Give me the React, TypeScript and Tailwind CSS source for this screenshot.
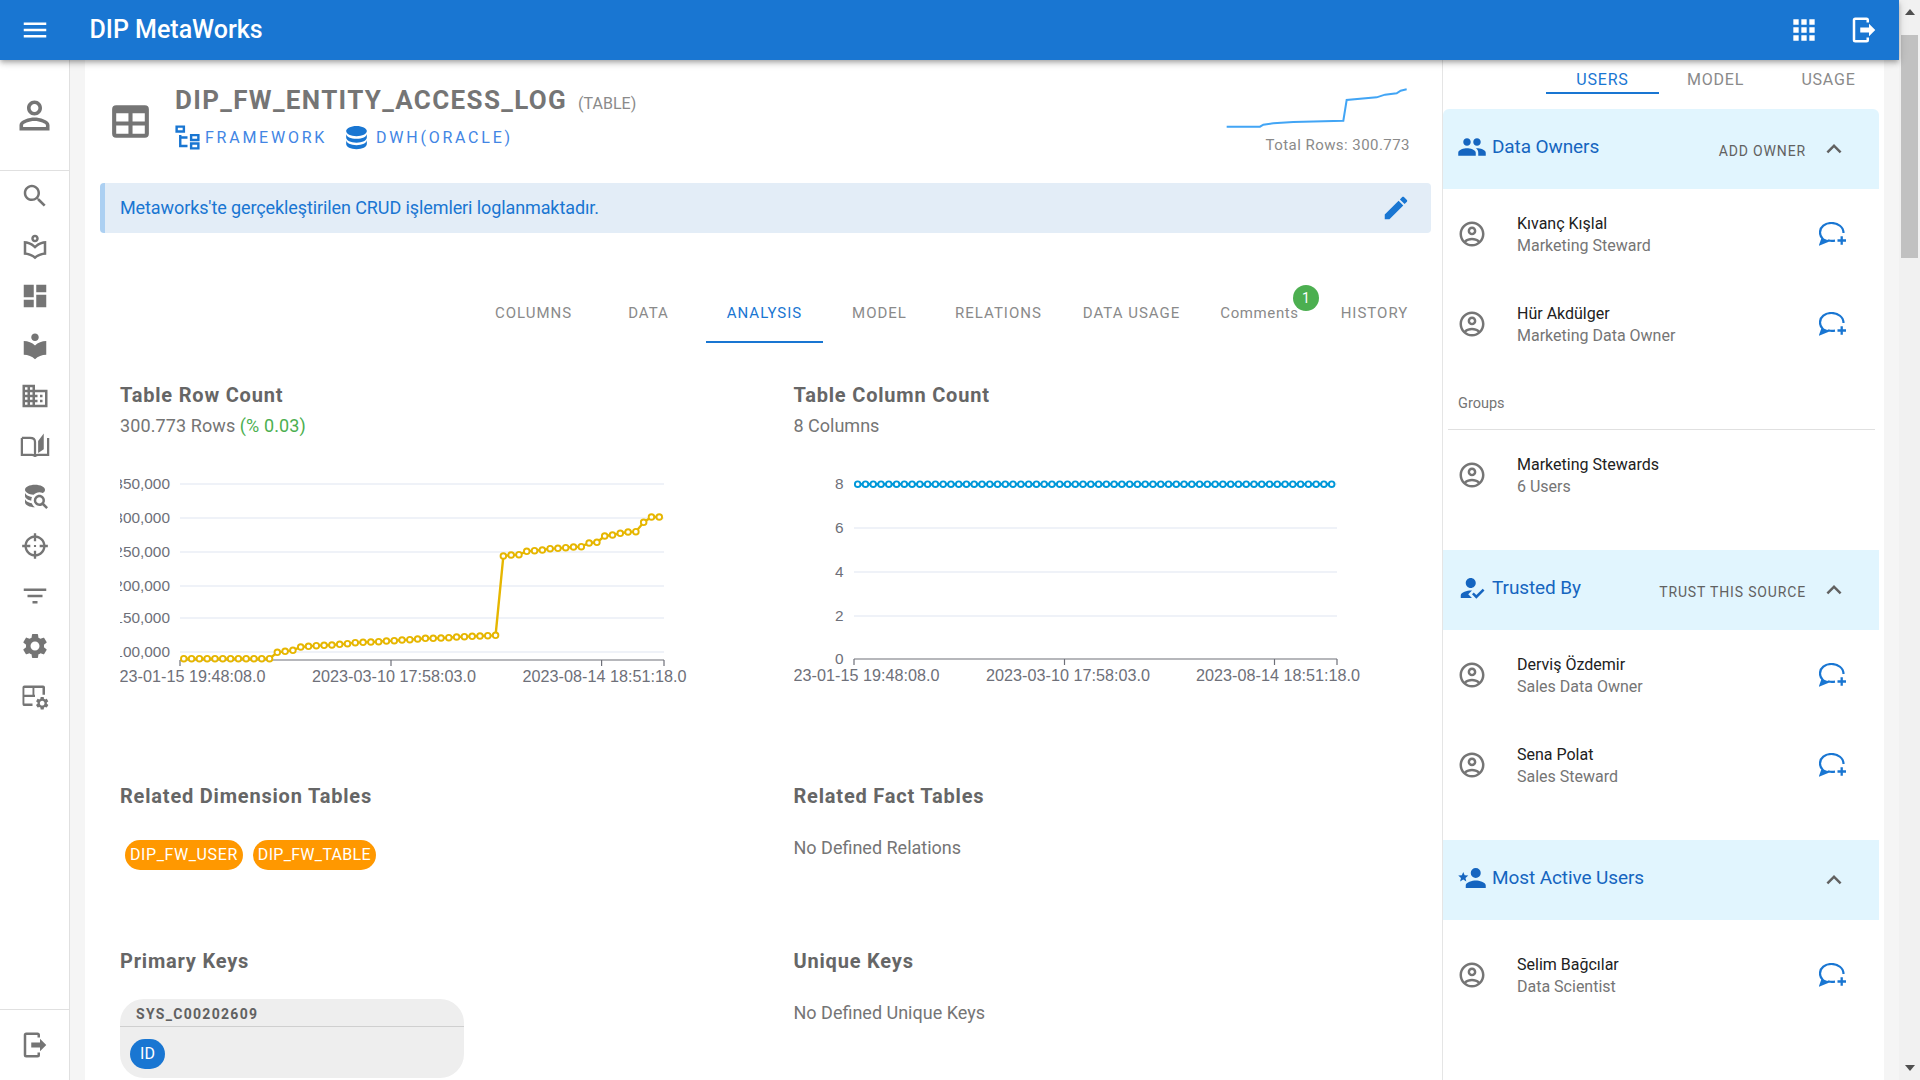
import type { ReactNode } from "react";

// Icon paths (24 unit box)
const P = {
  menu: "M3 18h18v-2H3v2zm0-5h18v-2H3v2zm0-7v2h18V6H3z",
  apps: "M4 8h4V4H4v4zm6 12h4v-4h-4v4zm-6 0h4v-4H4v4zm0-6h4v-4H4v4zm6 0h4v-4h-4v4zm6-10v4h4V4h-4zm-6 4h4V4h-4v4zm6 6h4v-4h-4v4zm0 6h4v-4h-4v4z",
  logout: "M16,17V14H9V10H16V7L21,12L16,17M14,2A2,2 0 0,1 16,4V6H14V4H5V20H14V18H16V20A2,2 0 0,1 14,22H5A2,2 0 0,1 3,20V4A2,2 0 0,1 5,2H14Z",
  person: "M12 5.9c1.16 0 2.1.94 2.1 2.1s-.94 2.1-2.1 2.1S9.9 9.16 9.9 8s.94-2.1 2.1-2.1m0 9c2.97 0 6.1 1.46 6.1 2.1v1.1H5.9V17c0-.64 3.13-2.1 6.1-2.1M12 4C9.79 4 8 5.79 8 8s1.79 4 4 4 4-1.79 4-4-1.79-4-4-4zm0 9c-2.67 0-8 1.34-8 4v3h16v-3c0-2.66-5.33-4-8-4z",
  search: "M15.5 14h-.79l-.28-.27C15.41 12.59 16 11.11 16 9.5 16 5.91 13.09 3 9.5 3S3 5.91 3 9.5 5.91 16 9.5 16c1.61 0 3.09-.59 4.23-1.57l.27.28v.79l5 4.99L20.49 19l-4.99-5zm-6 0C7.01 14 5 11.99 5 9.5S7.01 5 9.5 5 14 7.01 14 9.5 11.99 14 9.5 14z",
  libraryOutline: "M12 9c1.66 0 3-1.34 3-3s-1.34-3-3-3-3 1.34-3 3 1.34 3 3 3zm0-4c.55 0 1 .45 1 1s-.45 1-1 1-1-.45-1-1 .45-1 1-1zm0 6.55C9.64 9.35 6.48 8 3 8v11c3.48 0 6.64 1.35 9 3.55 2.36-2.19 5.52-3.55 9-3.55V8c-3.48 0-6.64 1.35-9 3.55zm7 5.58c-2.53.34-4.93 1.3-7 2.82-2.06-1.52-4.47-2.49-7-2.83v-6.95c2.1.38 4.05 1.35 5.64 2.83L12 14.28l1.36-1.27c1.59-1.48 3.54-2.45 5.64-2.83v6.95z",
  library: "M12 11.55C9.64 9.35 6.48 8 3 8v11c3.48 0 6.64 1.35 9 3.55 2.36-2.19 5.52-3.55 9-3.55V8c-3.48 0-6.64 1.35-9 3.55zM12 8c1.66 0 3-1.34 3-3s-1.34-3-3-3-3 1.34-3 3 1.34 3 3 3z",
  dashboard: "M3 13h8V3H3v10zm0 8h8v-6H3v6zm10 0h8V11h-8v10zm0-18v6h8V3h-8z",
  domain: "M12 7V3H2v18h20V7H12zM6 19H4v-2h2v2zm0-4H4v-2h2v2zm0-4H4V9h2v2zm0-4H4V5h2v2zm4 12H8v-2h2v2zm0-4H8v-2h2v2zm0-4H8V9h2v2zm0-4H8V5h2v2zm10 12h-8v-2h2v-2h-2v-2h2v-2h-2V9h8v10zm-2-8h-2v2h2v-2zm0 4h-2v2h2v-2z",
  dbSearch: "M18.68,12.32C16.92,10.56 14.07,10.57 12.32,12.33C10.56,14.09 10.56,16.94 12.32,18.69C13.81,20.17 16.11,20.43 17.89,19.32L21,22.39L22.39,21L19.3,17.89C20.43,16.12 20.17,13.8 18.68,12.32M17.27,17.27C16.29,18.25 14.71,18.24 13.73,17.27C12.76,16.29 12.76,14.71 13.74,13.73C14.71,12.76 16.29,12.76 17.27,13.73C18.24,14.71 18.24,16.29 17.27,17.27M10.9,20.1C10.25,19.44 9.74,18.65 9.42,17.78C6.27,17.25 4,15.76 4,14V17C4,19.21 7.58,21 12,21V21C11.6,20.74 11.23,20.44 10.9,20.1M4,9V12C4,13.68 6.07,15.12 9,15.7C9,15.63 9,15.57 9,15.5C9,14.57 9.2,13.65 9.58,12.81C6.34,12.3 4,10.79 4,9M12,3C7.58,3 4,4.79 4,7C4,9 7,10.68 10.85,11H10.9C12.1,9.74 13.76,9 15.5,9C16.41,9.03 17.31,9.25 18.14,9.64C19.3,9.11 20,8.39 20,7C20,4.79 16.42,3 12,3Z",
  crosshair: "M3.05 13H1V11H3.05C3.5 6.83 6.83 3.5 11 3.05V1H13V3.05C17.17 3.5 20.5 6.83 20.95 11H23V13H20.95C20.5 17.17 17.17 20.5 13 20.95V23H11V20.95C6.83 20.5 3.5 17.17 3.05 13M12 5C8.13 5 5 8.13 5 12S8.13 19 12 19 19 15.87 19 12 15.87 5 12 5ZM11 5h2v3h-2zM11 16h2v3h-2zM5 11h3v2H5zM16 11h3v2h-3zM11.1 11.1h1.8v1.8h-1.8z",
  filter: "M10 18h4v-2h-4v2zM3 6v2h18V6H3zm3 7h12v-2H6v2z",
  settings: "M19.14 12.94c.04-.3.06-.61.06-.94 0-.32-.02-.64-.07-.94l2.03-1.58c.18-.14.23-.41.12-.61l-1.92-3.32c-.12-.22-.37-.29-.59-.22l-2.39.96c-.5-.38-1.03-.7-1.62-.94l-.36-2.54c-.04-.24-.24-.41-.48-.41h-3.84c-.24 0-.43.17-.47.41l-.36 2.54c-.59.24-1.13.57-1.62.94l-2.39-.96c-.22-.08-.47 0-.59.22L2.74 8.87c-.12.21-.08.47.12.61l2.03 1.58c-.05.3-.09.63-.09.94s.02.64.07.94l-2.03 1.58c-.18.14-.23.41-.12.61l1.92 3.32c.12.22.37.29.59.22l2.39-.96c.5.38 1.03.7 1.62.94l.36 2.54c.05.24.24.41.48.41h3.84c.24 0 .44-.17.47-.41l.36-2.54c.59-.24 1.13-.56 1.62-.94l2.39.96c.22.08.47 0 .59-.22l1.92-3.32c.12-.22.07-.47-.12-.61l-2.01-1.58zM12 15.6c-1.98 0-3.6-1.62-3.6-3.6s1.62-3.6 3.6-3.6 3.6 1.62 3.6 3.6-1.62 3.6-3.6 3.6z",
  table: "M5,4H19A2,2 0 0,1 21,6V18A2,2 0 0,1 19,20H5A2,2 0 0,1 3,18V6A2,2 0 0,1 5,4M5,8V12H11V8H5M13,8V12H19V8H13M5,14V18H11V14H5M13,14V18H19V14H13Z",
  fileTree: "M12 13H7V18H12V20H5V10H7V11H12V13M8 4V6H4V4H8M10 2H2V8H10V2M20 11V13H16V11H20M22 9H14V15H22V9M20 18V20H16V18H20M22 16H14V22H22V16Z",
  database: "M12,3C7.58,3 4,4.79 4,7C4,9.21 7.58,11 12,11C16.42,11 20,9.21 20,7C20,4.79 16.42,3 12,3M4,9V12C4,14.21 7.58,16 12,16C16.42,16 20,14.21 20,12V9C20,11.21 16.42,13 12,13C7.58,13 4,11.21 4,9M4,14V17C4,19.21 7.58,21 12,21C16.42,21 20,19.21 20,17V14C20,16.21 16.42,18 12,18C7.58,18 4,16.21 4,14Z",
  edit: "M3 17.25V21h3.75L17.81 9.94l-3.75-3.75L3 17.25zM20.71 7.04c.39-.39.39-1.02 0-1.41l-2.34-2.34c-.39-.39-1.02-.39-1.41 0l-1.83 1.83 3.75 3.75 1.83-1.83z",
  people: "M16 11c1.66 0 2.99-1.34 2.99-3S17.66 5 16 5c-1.66 0-3 1.34-3 3s1.34 3 3 3zm-8 0c1.66 0 2.99-1.34 2.99-3S9.66 5 8 5C6.34 5 5 6.34 5 8s1.34 3 3 3zm0 2c-2.33 0-7 1.17-7 3.5V19h14v-2.5c0-2.33-4.67-3.5-7-3.5zm8 0c-.29 0-.62.02-.97.05 1.16.84 1.97 1.97 1.97 3.45V19h6v-2.5c0-2.33-4.67-3.5-7-3.5z",
  howToReg: "M9 17l3-2.94c-.39-.04-.68-.06-1-.06-2.67 0-8 1.34-8 4v2h9l-3-3zm2-5c2.21 0 4-1.79 4-4s-1.79-4-4-4-4 1.79-4 4 1.79 4 4 4m4.47 8.5L12 17l1.4-1.41 2.07 2.08 5.13-5.17 1.4 1.41z",
  accountStar: "M15,14C12.33,14 7,15.33 7,18V20H23V18C23,15.33 17.67,14 15,14M15,12A4,4 0 0,0 19,8A4,4 0 0,0 15,4A4,4 0 0,0 11,8A4,4 0 0,0 15,12M5,13.28L7.45,14.77L6.8,11.96L9,10.08L6.11,9.83L5,7.19L3.87,9.83L1,10.08L3.18,11.96L2.5,14.77L5,13.28Z",
  accountCircle: "M12 2C6.48 2 2 6.48 2 12s4.48 10 10 10 10-4.48 10-10S17.52 2 12 2zM7.35 18.5C8.66 17.56 10.26 17 12 17s3.34.56 4.65 1.5c-1.31.94-2.91 1.5-4.65 1.5s-3.34-.56-4.65-1.5zm10.79-1.38C16.45 15.8 14.32 15 12 15s-4.45.8-6.14 2.12C4.7 15.73 4 13.95 4 12c0-4.42 3.58-8 8-8s8 3.58 8 8c0 1.95-.7 3.73-1.86 5.12zM12 6c-1.93 0-3.5 1.57-3.5 3.5S10.07 13 12 13s3.5-1.57 3.5-3.5S13.93 6 12 6zm0 5c-.83 0-1.5-.67-1.5-1.5S11.17 8 12 8s1.5.67 1.5 1.5S12.83 11 12 11z",
  chevronUp: "M12 8l-6 6 1.41 1.41L12 10.83l4.59 4.58L18 14z",
};

function Icon({ d, className }: { d: string; className: string }) {
  return (
    <svg viewBox="0 0 24 24" className={className} fill="currentColor" fillRule="evenodd">
      <path d={d} />
    </svg>
  );
}

function BookIcon({ className }: { className: string }) {
  return (
    <svg viewBox="0 0 24 24" className={className} fill="none" stroke="currentColor" strokeWidth="1.8">
      <path d="M1.5 5.5V19h8c1.3 0 2.5.5 2.5 1.5 0-1 1.2-1.5 2.5-1.5h8V5.5" />
      <path d="M1.5 5.5H8c2.3 0 4 1.2 4 3.2v11.8" />
      <path d="M14.5 8L19 2v12.5L14.5 17.5z" fill="currentColor" stroke="none" />
    </svg>
  );
}

function TableCogIcon({ className }: { className: string }) {
  return (
    <svg viewBox="0 0 24 24" className={className} fill="currentColor">
      <path
        fillRule="evenodd"
        d="M3.5 3.5h15A1.5 1.5 0 0 1 20 5v6h-2V5.5h-6.5V11H10V5.5H3.5V11H12v1.8H3.5V18H10v2H3.5A1.5 1.5 0 0 1 2 18.5V5a1.5 1.5 0 0 1 1.5-1.5z"
      />
      <g transform="translate(11.5 11.5) scale(0.52)">
        <path d={P.settings} />
      </g>
    </svg>
  );
}

function ChatAddIcon() {
  return (
    <svg viewBox="0 0 28 24" className="w-[28px] h-[24px] text-[#1976d2]" fill="none" stroke="currentColor" strokeWidth="2.2">
      <path d="M24.5 11C24.5 5 19 1 12.5 1 6 1 1 5 1 10.5c0 2.5 1 4.5 2.5 6L1.5 22l8.5-3.5c1 .3 3 .5 6 .1" />
      <path d="M1.5 22l2-6 6 2.5z" fill="currentColor" stroke="none" />
      <path d="M18.5 18.5h8.5M22.7 14.2v8.6" strokeWidth="2.3" />
    </svg>
  );
}

function TopBar() {
  return (
    <header className="relative z-10 h-[60px] shrink-0 bg-[#1976d2] text-white flex items-center shadow-[0_2px_4px_-1px_rgba(0,0,0,0.2),0_4px_5px_0_rgba(0,0,0,0.14),0_1px_10px_0_rgba(0,0,0,0.12)]">
      <Icon d={P.menu} className="ml-[20px] w-[30px] h-[30px]" />
      <span className="ml-[39.5px] text-[25px] font-medium">DIP MetaWorks</span>
      <Icon d={P.apps} className="ml-auto w-[32px] h-[32px]" />
      <Icon d={P.logout} className="ml-[29px] mr-[20px] w-[30px] h-[30px]" />
    </header>
  );
}

function SideNav() {
  const cls = "w-[30px] h-[30px]";
  const items: ReactNode[] = [
    <Icon d={P.search} className={cls} />,
    <Icon d={P.libraryOutline} className={cls} />,
    <Icon d={P.dashboard} className={cls} />,
    <Icon d={P.library} className={cls} />,
    <Icon d={P.domain} className={cls} />,
    <BookIcon className={cls} />,
    <Icon d={P.dbSearch} className={cls} />,
    <Icon d={P.crosshair} className="w-[28px] h-[28px]" />,
    <Icon d={P.filter} className={cls} />,
    <Icon d={P.settings} className={cls} />,
    <TableCogIcon className={cls} />,
  ];
  return (
    <nav className="w-[70px] shrink-0 bg-white border-r border-[#e0e0e0] text-[#757575] flex flex-col">
      <div className="h-[111px] shrink-0 flex items-center justify-center border-b border-[#e0e0e0]">
        <Icon d={P.person} className="w-[45px] h-[45px]" />
      </div>
      <div className="flex flex-col items-center">
        {items.map((it, i) => (
          <div key={i} className="h-[50px] flex items-center justify-center">
            {it}
          </div>
        ))}
      </div>
      <div className="mt-auto h-[71px] border-t border-[#e0e0e0] flex items-center justify-center">
        <Icon d={P.logout} className="w-[30px] h-[30px]" />
      </div>
    </nav>
  );
}

const TABS = [
  { label: "COLUMNS", w: "w-[115px]" },
  { label: "DATA", w: "w-[115px]" },
  { label: "ANALYSIS", w: "w-[117px]", active: true },
  { label: "MODEL", w: "w-[113px]" },
  { label: "RELATIONS", w: "w-[125px]" },
  { label: "DATA USAGE", w: "w-[141px]" },
  { label: "Comments", w: "w-[115px]", badge: true },
  { label: "HISTORY", w: "w-[115px]" },
];

function MainTabs() {
  return (
    <div className="mt-[53px] h-[57px] -mr-[1px] flex justify-end">
      {TABS.map((t) => (
        <div
          key={t.label}
          className={`${t.w} relative flex items-center justify-center text-[15px] border-b-2 ${
            t.badge ? "tracking-[0.6px]" : "tracking-[1px]"
          } ${t.active ? "border-[#1976d2] text-[#1976d2]" : "border-transparent text-[#8a8a8a]"}`}
        >
          {t.label}
          {t.badge && (
            <span className="absolute right-[-2px] top-[-1px] w-[26px] h-[26px] rounded-full bg-[#4caf50] text-white text-[14px] tracking-normal flex items-center justify-center">
              1
            </span>
          )}
        </div>
      ))}
    </div>
  );
}

type ChartProps = {
  gridY: number[];
  yLabels: string[];
  yLabelX: number;
  ticks: number[];
  labelX: number[];
  axisY: number;
  axisLabel?: string;
  plotEnd: number;
  points: [number, number][];
  color: string;
};

function LineChart({ gridY, yLabels, yLabelX, ticks, labelX, axisY, axisLabel, plotEnd, points, color }: ChartProps) {
  const xLabels = ["2023-01-15 19:48:08.0", "2023-03-10 17:58:03.0", "2023-08-14 18:51:18.0"];
  return (
    <svg width="600" height="230" className="font-['Liberation_Sans',sans-serif] text-[16.2px] block">
      {gridY.map((y, i) => (
        <g key={i}>
          <line x1={ticks[0]} x2={plotEnd} y1={y} y2={y} stroke="#e0e6f1" strokeWidth="1.2" />
          <text x={yLabelX} y={y + 1} textAnchor="end" dominantBaseline="middle" fill="#6e7079" className="text-[15.4px]">
            {yLabels[i]}
          </text>
        </g>
      ))}
      {axisLabel && (
        <text x={yLabelX} y={axisY + 0.5} textAnchor="end" dominantBaseline="middle" fill="#6e7079" className="text-[15.4px]">
          {axisLabel}
        </text>
      )}
      <line x1={ticks[0]} x2={plotEnd} y1={axisY} y2={axisY} stroke="#6e7079" strokeWidth="1.2" />
      {ticks.map((x, i) => (
        <line key={i} x1={x} x2={x} y1={axisY} y2={axisY + 6} stroke="#6e7079" strokeWidth="1.2" />
      ))}
      {xLabels.map((l, i) => (
        <text key={i} x={labelX[i]} y={axisY + 17.5} textAnchor="middle" dominantBaseline="middle" fill="#6e7079">
          {l}
        </text>
      ))}
      <polyline points={points.map((p) => p.join(",")).join(" ")} fill="none" stroke={color} strokeWidth="2.4" />
      {points.map((p, i) => (
        <circle key={i} cx={p[0]} cy={p[1]} r="2.8" fill="#fff" stroke={color} strokeWidth="1.9" />
      ))}
    </svg>
  );
}

// Row count series, read off the chart as pixel heights
const ROW_Y = [
  869, 869, 869, 869, 869, 869, 869, 869, 869, 869, 869, 869, 850, 847, 844, 834, 832, 830, 829, 828, 826, 824, 821, 820,
  819, 818, 816, 815, 813, 812, 810, 808, 808, 807, 806, 804, 803, 802, 801, 800, 799, 561, 558, 557, 547, 545, 543, 539,
  538, 536, 534, 533, 522, 520, 501, 498, 493, 489, 488, 460, 444, 444,
];
const rowPoints: [number, number][] = ROW_Y.map((zy, i) => [100 + (212 + 19.72 * i) / 2.53 - 120, 370 + zy / 3 - 470]);
const colPoints: [number, number][] = ROW_Y.map((_, i) => [63.7 + 7.77 * i, 15.2]);

function SectionTitle({ children }: { children: ReactNode }) {
  return <h3 className="h-[28px] leading-[28px] text-[20px] font-bold tracking-[0.8px] text-[#666666]">{children}</h3>;
}

function BodyText({ children }: { children: ReactNode }) {
  return <p className="mt-[24px] h-[28px] leading-[28px] text-[18px] text-[#757575]">{children}</p>;
}

function Analysis() {
  return (
    <div className="pl-[20px] pt-[38px] grid grid-cols-[673.5px_1fr]">
      <div className="h-[319px]">
        <SectionTitle>Table Row Count</SectionTitle>
        <p className="mt-[5px] h-[24px] leading-[24px] text-[18px] tracking-[0.1px] text-[#757575]">
          300.773 Rows <span className="text-[#4caf50]">(% 0.03)</span>
        </p>
        <div className="mt-[31px]">
          <LineChart
            gridY={[15, 49, 83, 117, 149, 183]}
            yLabels={["350,000", "300,000", "250,000", "200,000", "150,000", "100,000"]}
            yLabelX={50}
            ticks={[60, 271, 481.6, 544]}
            labelX={[63.5, 274, 484.5]}
            axisY={191}
            plotEnd={544}
            points={rowPoints}
            color="#e6b600"
          />
        </div>
      </div>
      <div className="h-[319px]">
        <SectionTitle>Table Column Count</SectionTitle>
        <p className="mt-[5px] h-[24px] leading-[24px] text-[18px] text-[#757575]">8 Columns</p>
        <div className="mt-[31px]">
          <LineChart
            gridY={[15, 59, 103, 147]}
            yLabels={["8", "6", "4", "2"]}
            yLabelX={49.5}
            ticks={[60, 270.5, 480.5, 543]}
            labelX={[63.5, 274, 484]}
            axisY={190}
            axisLabel="0"
            plotEnd={543}
            points={colPoints}
            color="#0098d9"
          />
        </div>
      </div>

      <div className="mt-[82px] h-[88px]">
        <SectionTitle>Related Dimension Tables</SectionTitle>
        <div className="mt-[30px] ml-[5px] flex gap-[10px]">
          <span className="h-[30px] px-[5px] rounded-full bg-[#ff9800] text-white text-[16px] tracking-[0.6px] leading-[30px]">DIP_FW_USER</span>
          <span className="h-[30px] px-[5px] rounded-full bg-[#ff9800] text-white text-[16px] tracking-[0.3px] leading-[30px]">DIP_FW_TABLE</span>
        </div>
      </div>
      <div className="mt-[82px] h-[88px]">
        <SectionTitle>Related Fact Tables</SectionTitle>
        <BodyText>No Defined Relations</BodyText>
      </div>

      <div className="mt-[77px]">
        <SectionTitle>Primary Keys</SectionTitle>
        <div className="mt-[24px] w-[344px] h-[79px] rounded-[24px] bg-[#eeeeee]">
          <div className="h-[28px] border-b border-[#cfcfcf] pl-[16px] text-[14px] leading-[30px] font-bold tracking-[1.3px] text-[#616161]">
            SYS_C00202609
          </div>
          <span className="mt-[12px] ml-[10px] w-[35px] h-[30px] rounded-full bg-[#1976d2] text-white text-[16px] flex items-center justify-center">
            ID
          </span>
        </div>
      </div>
      <div className="mt-[77px]">
        <SectionTitle>Unique Keys</SectionTitle>
        <BodyText>No Defined Unique Keys</BodyText>
      </div>
    </div>
  );
}

function MainContent() {
  const spark = [
    [140, 200], [240, 200], [250, 194], [280, 190], [340, 186], [490, 182], [500, 120], [590, 112], [615, 104], [650, 100], [662, 92], [680, 88],
  ];
  return (
    <main className="flex-1 min-w-0 bg-white pl-[15px] pr-[11px]">
      <div className="h-[123px] flex items-center pl-[6px]">
        <Icon d={P.table} className="w-[49px] h-[49px] text-[#757575] shrink-0" />
        <div className="ml-[20px]">
          <div className="h-[32px] pt-[1px] flex items-baseline">
            <span className="text-[26px] leading-[32px] font-bold tracking-[1.35px] text-[#757575]">DIP_FW_ENTITY_ACCESS_LOG</span>
            <span className="ml-[11px] text-[16px] text-[#8a8a8a]">(TABLE)</span>
          </div>
          <div className="h-[45px] flex items-center text-[#4285e4] text-[16px] tracking-[2.75px]">
            <Icon d={P.fileTree} className="w-[29px] h-[29px] -ml-[2px] text-[#1976d2]" />
            <span className="ml-[3px]">FRAMEWORK</span>
            <Icon d={P.database} className="ml-[14px] w-[31px] h-[31px] text-[#1976d2]" />
            <span className="ml-[4px]">DWH(ORACLE)</span>
          </div>
        </div>
        <div className="ml-auto self-start pt-[25px] pr-[21px] w-[211px]">
          <svg width="190" height="45" className="block ml-auto">
            <polyline points={spark.map(([x, y]) => `${x / 3 - 40},${y / 3 - 25}`).join(" ")} fill="none" stroke="#42a5f5" strokeWidth="2" />
          </svg>
          <p className="mt-[5px] h-[20px] leading-[20px] text-right text-[15px] tracking-[0.45px] text-[#8a8a8a]">Total Rows: 300.773</p>
        </div>
      </div>
      <div className="h-[50px] rounded-[4px] bg-[#e3edf7] border-l-[5px] border-[#acd0f2] pl-[15px] pr-[20px] flex items-center justify-between">
        <span className="pb-[2px] text-[18px] tracking-[-0.1px] text-[#1976d2]">Metaworks'te gerçekleştirilen CRUD işlemleri loglanmaktadır.</span>
        <Icon d={P.edit} className="w-[30px] h-[30px] text-[#1976d2]" />
      </div>
      <MainTabs />
      <Analysis />
    </main>
  );
}

function Person({ name, role, chat = true }: { name: string; role: string; chat?: boolean }) {
  return (
    <div className="h-[90px] flex items-center">
      <Icon d={P.accountCircle} className="ml-[14px] w-[30px] h-[30px] text-[#757575] shrink-0" />
      <div className="ml-[30px] mt-[1px] flex-1">
        <p className="h-[22px] leading-[22px] text-[16px] text-[#212121]">{name}</p>
        <p className="h-[22px] leading-[22px] text-[16px] text-[#757575]">{role}</p>
      </div>
      {chat && (
        <div className="mr-[37px]">
          <ChatAddIcon />
        </div>
      )}
    </div>
  );
}

function PanelHeader({
  icon,
  title,
  action,
  rounded,
}: {
  icon: string;
  title: string;
  action?: string;
  rounded?: boolean;
}) {
  return (
    <div className={`h-[80px] w-[436px] bg-[#e1f5fe] flex items-center ${rounded ? "rounded-t-[6px]" : ""}`}>
      <Icon d={icon} className="ml-[14px] w-[30px] h-[30px] text-[#1565c0] shrink-0 -mt-[4px]" />
      <span className="ml-[5px] -mt-[3px] text-[19px] tracking-[-0.1px] text-[#1565c0]">{title}</span>
      {action && <span className="ml-auto mt-[4px] text-[14px] tracking-[0.85px] text-[#616161]">{action}</span>}
      <Icon d={P.chevronUp} className={`${action ? "ml-[13px]" : "ml-auto"} mr-[30px] w-[30px] h-[30px] text-[#616161] shrink-0`} />
    </div>
  );
}

function RightPanel() {
  return (
    <aside className="w-[442px] shrink-0 bg-white border-l border-[#e5e5e5]">
      <div className="h-[34px] flex justify-end -mr-[1px]">
        {["USERS", "MODEL", "USAGE"].map((t, i) => (
          <div
            key={t}
            className={`w-[113px] pt-[7px] flex items-center justify-center text-[16px] tracking-[0.8px] border-b-2 ${
              i === 0 ? "border-[#1976d2] text-[#1976d2]" : "border-transparent text-[#8a8a8a]"
            }`}
          >
            {t}
          </div>
        ))}
      </div>
      <div className="mt-[15px]">
        <PanelHeader icon={P.people} title="Data Owners" action="ADD OWNER" rounded />
        <Person name="Kıvanç Kışlal" role="Marketing Steward" />
        <Person name="Hür Akdülger" role="Marketing Data Owner" />
        <p className="mt-[25px] ml-[15px] h-[20px] leading-[20px] text-[14.5px] text-[#757575]">Groups</p>
        <div className="mt-[15px] ml-[5px] w-[427px] border-t border-[#e0e0e0]" />
        <Person name="Marketing Stewards" role="6 Users" chat={false} />
      </div>
      <div className="mt-[30px]">
        <PanelHeader icon={P.howToReg} title="Trusted By" action="TRUST THIS SOURCE" />
        <Person name="Derviş Özdemir" role="Sales Data Owner" />
        <Person name="Sena Polat" role="Sales Steward" />
      </div>
      <div className="mt-[30px]">
        <PanelHeader icon={P.accountStar} title="Most Active Users" />
        <div className="mt-[10px]">
          <Person name="Selim Bağcılar" role="Data Scientist" />
        </div>
      </div>
    </aside>
  );
}

function FakeScrollbar() {
  return (
    <div className="w-[21px] shrink-0 bg-[#f1f1f1] flex flex-col items-center">
      <svg width="10" height="6" className="mt-[9px] shrink-0">
        <path d="M0 6L5 0l5 6z" fill="#505050" />
      </svg>
      <div className="mt-[20px] w-[17px] h-[223px] bg-[#c1c1c1]" />
      <svg width="10" height="6" className="mt-auto mb-[9px] shrink-0">
        <path d="M0 0l5 6 5-6z" fill="#505050" />
      </svg>
    </div>
  );
}

export default function App() {
  return (
    <div className="h-[1080px] w-[1920px] overflow-hidden flex font-[Roboto,sans-serif] text-[#757575]">
      <div className="w-[1899px] shrink-0 flex flex-col">
        <TopBar />
        <div className="flex-1 min-h-0 flex">
          <SideNav />
          <div className="w-[15px] shrink-0 bg-[#f5f5f5]" />
          <MainContent />
          <RightPanel />
          <div className="w-[15px] shrink-0 bg-[#f5f5f5]" />
        </div>
      </div>
      <FakeScrollbar />
    </div>
  );
}
